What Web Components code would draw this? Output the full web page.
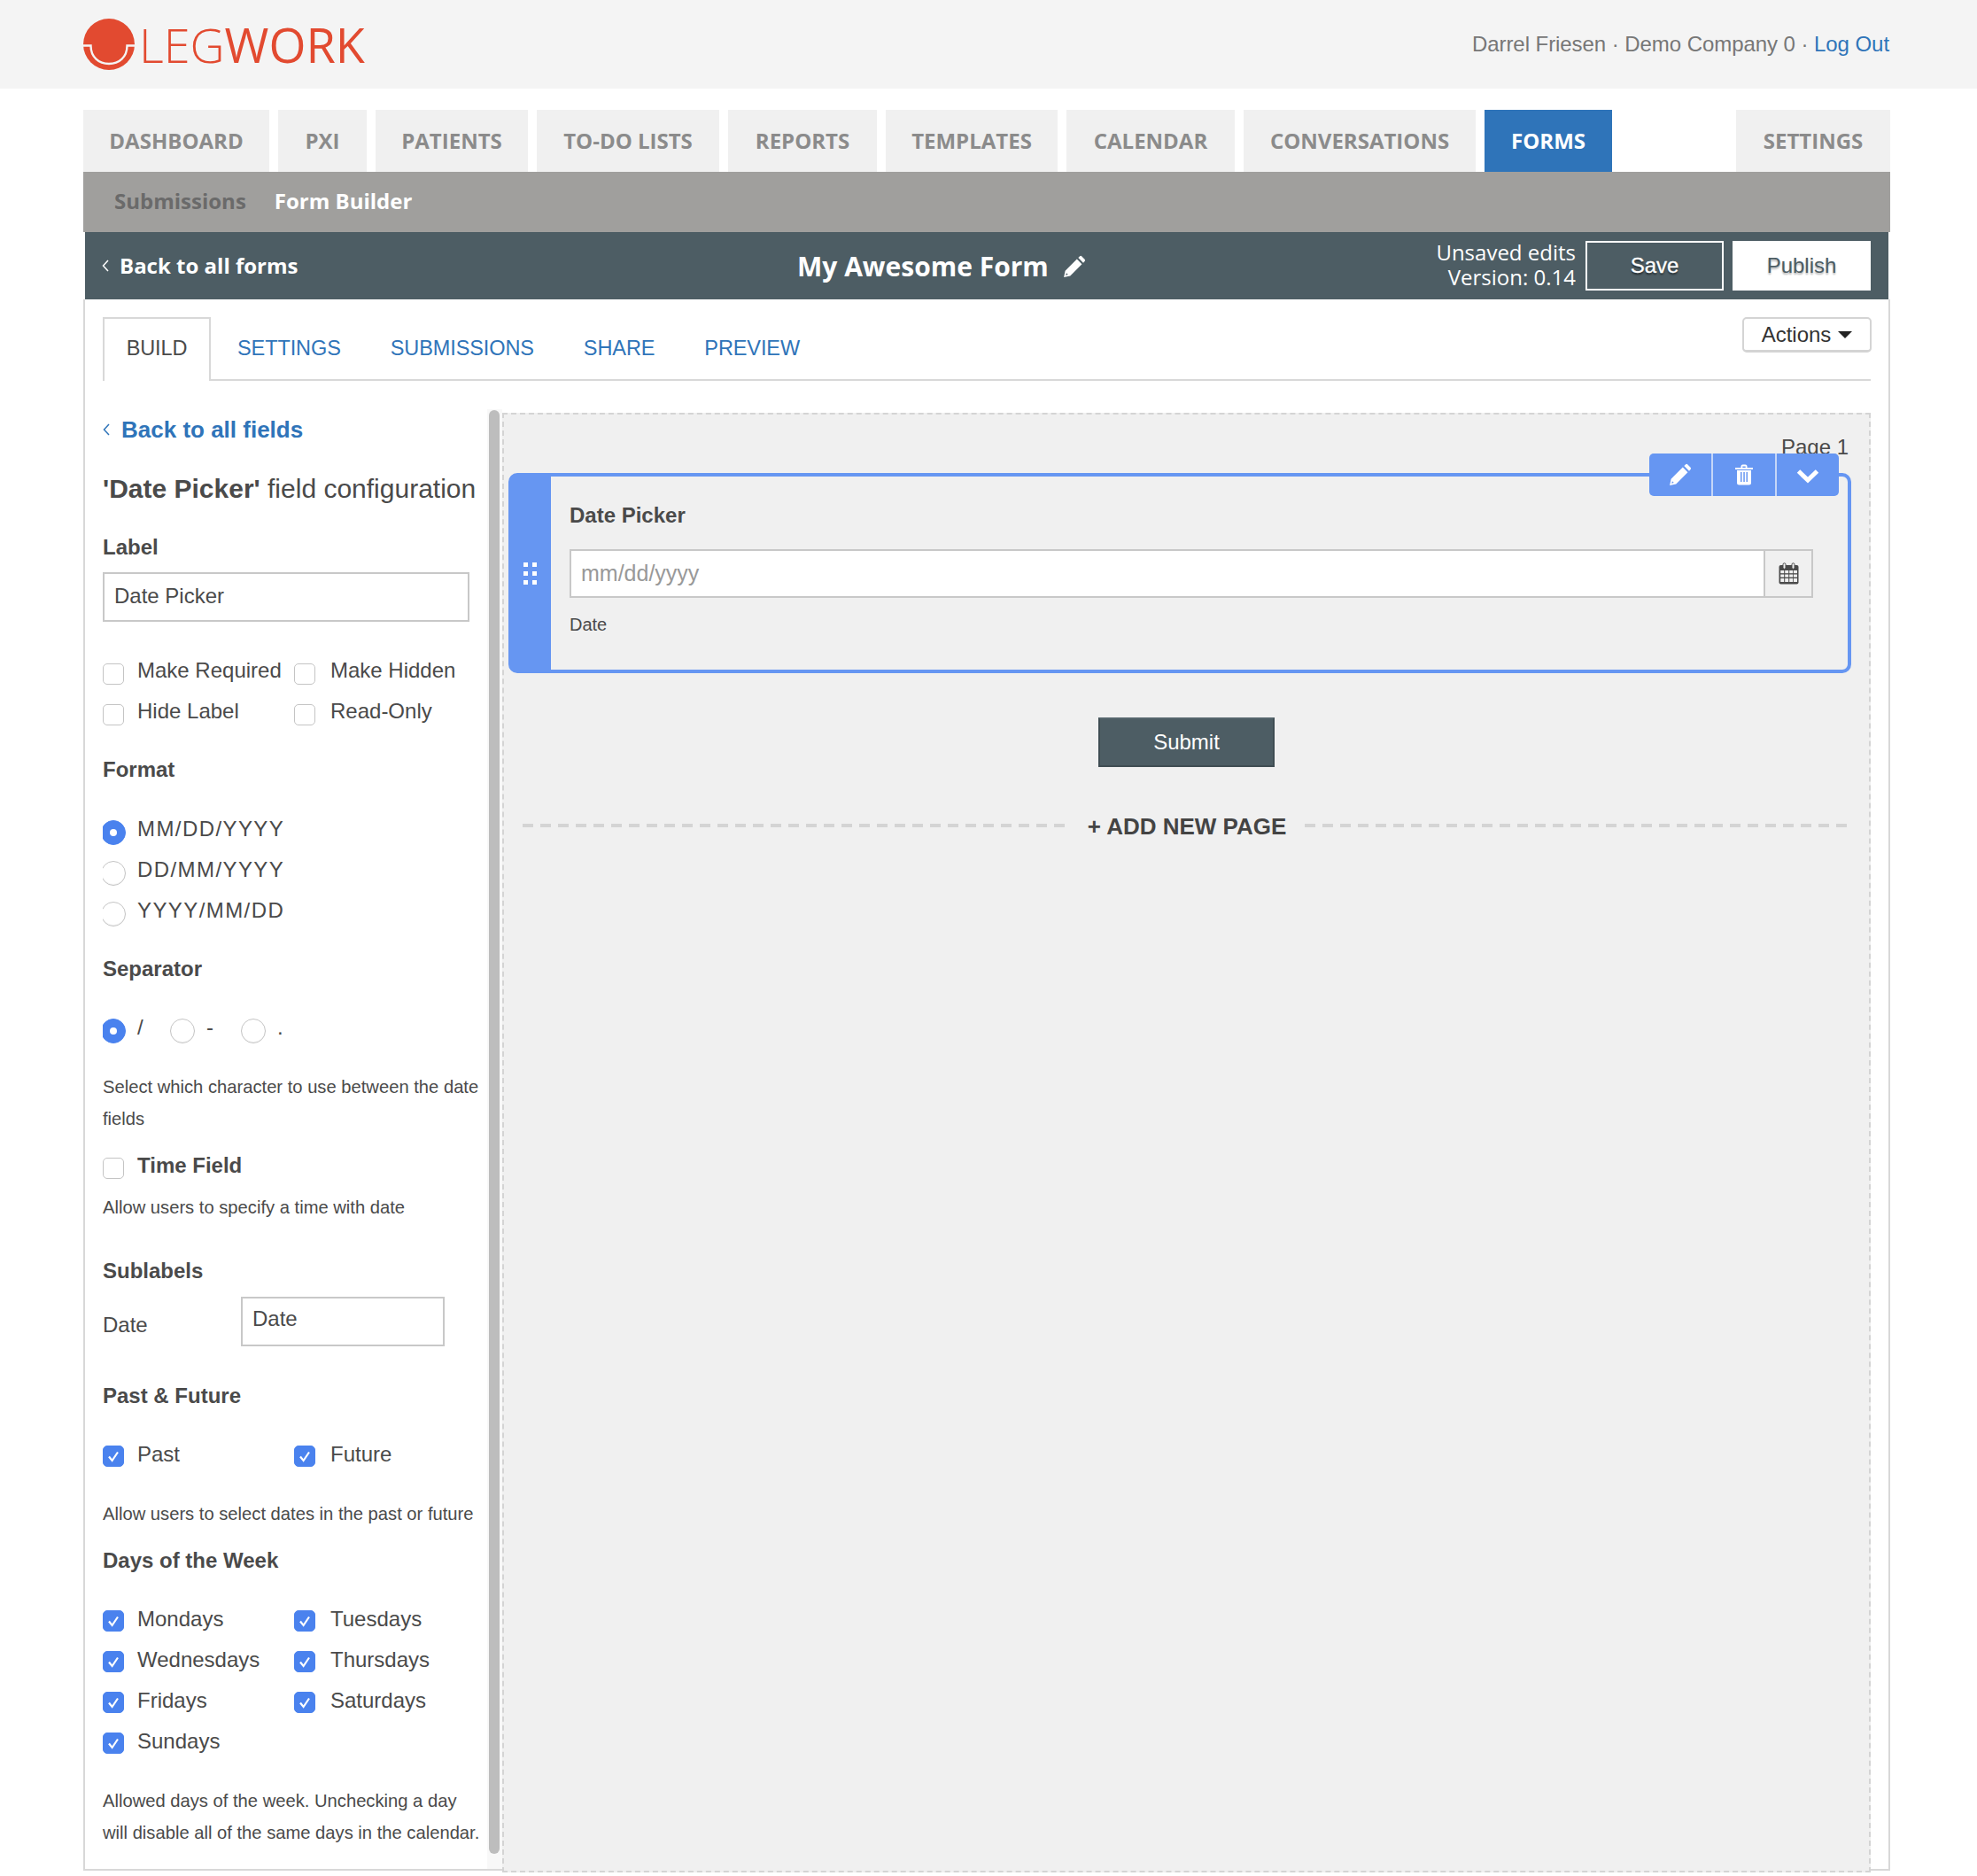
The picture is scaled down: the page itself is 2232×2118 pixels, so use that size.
<!DOCTYPE html>
<html lang="en">
<head>
<meta charset="utf-8">
<title>Legwork Form Builder</title>
<style>
  html, body { margin: 0; background: #fff; }
  body { font-family: "Liberation Sans", Arial, sans-serif; color: #4a4a4a; }
  app-shell { width: 2232px; height: 2118px; }
</style>
</head>
<body>
<app-shell>
  <app-header slot="header"></app-header>
  <main-nav slot="nav">
    <nav-tab style="width:210px">DASHBOARD</nav-tab>
    <nav-tab style="width:100px">PXI</nav-tab>
    <nav-tab style="width:172px">PATIENTS</nav-tab>
    <nav-tab style="width:206px">TO-DO LISTS</nav-tab>
    <nav-tab style="width:168px">REPORTS</nav-tab>
    <nav-tab style="width:194px">TEMPLATES</nav-tab>
    <nav-tab style="width:190px">CALENDAR</nav-tab>
    <nav-tab style="width:262px">CONVERSATIONS</nav-tab>
    <nav-tab style="width:144px" active>FORMS</nav-tab>
    <nav-tab style="width:174px" push>SETTINGS</nav-tab>
  </main-nav>
  <sub-nav slot="nav"></sub-nav>
  <form-bar slot="nav"></form-bar>
  <build-tabs slot="body"></build-tabs>
  <div slot="body" style="display:flex;height:1648px;margin-top:32px">
    <config-sidebar></config-sidebar>
    <form-canvas></form-canvas>
  </div>
</app-shell>

<script>
  // Icons used in more than one element
  const PENCIL = `<svg viewBox="0 0 24 24" fill="currentColor"><path d="M1 23l1.400-6.600L14.600 4.200l5.200 5.200L7.600 21.600zM3 21l2.400-.6-1.800-1.800z" fill-rule="evenodd"/><path d="M16 2.800l1.500-1.500a1.600 1.600 0 0 1 2.200 0l3 3a1.600 1.600 0 0 1 0 2.200l-1.500 1.500z"/></svg>`;
  const CHECK = `<svg viewBox="0 0 24 24" fill="none" stroke="#fff" stroke-width="2.200"><path d="M7 12.500l3.600 4.500L17 7.500"/></svg>`;

  class Base extends HTMLElement {
    constructor() {
      super();
      this.shadow = this.attachShadow({ mode: "open" });
      this.shadow.innerHTML = `<style>${this.css()}</style>${this.html()}`;
    }
    css() { return ":host{display:block}"; }
    html() { return "<slot></slot>"; }
  }

  class AppShell extends Base {
    css() {
      return `
        :host { display: block; }
        .wrap { width: 2040px; margin-left: 94px; margin-top: 24px; }
        .body { display: flow-root; border: solid #d8d8d8; border-width: 0 2px 2px 2px; width: 2036px; height: 1772px; box-sizing: content-box; }
      `;
    }
    html() {
      return `<slot name="header"></slot>
        <div class="wrap"><slot name="nav"></slot><div class="body"><slot name="body"></slot></div></div>`;
    }
  }

  class AppHeader extends Base {
    css() {
      return `
        :host { display: flex; height: 100px; background: #f4f4f4; align-items: center; justify-content: space-between; padding: 0 99px 0 94px; font-size: 24px; letter-spacing: -0.06px; color: #777; }
        .logo { display: flex; align-items: center; gap: 5px; color: #e24a30; }
        svg { width: 58px; height: 58px; display: block; }
        .word { font-family: "Open Sans", sans-serif; font-size: 54px; line-height: 58px; letter-spacing: 0; font-weight: 300; }
        .word b { font-weight: 500; }
        a { color: #2f74b9; text-decoration: none; }
      `;
    }
    html() {
      return `
        <div class="logo">
          <svg viewBox="0 0 58 58"><circle cx="29" cy="29" r="29" fill="#e24a30"/><path d="M0 30.500h8.500c0 13 9 20.500 20.500 20.500s20.500-7.500 20.500-20.500H58" fill="none" stroke="#f4f4f4" stroke-width="2.400"/></svg>
          <div class="word">LEG<b>WORK</b></div>
        </div>
        <div>Darrel Friesen · Demo Company 0 · <a>Log Out</a></div>`;
    }
  }

  class MainNav extends Base {
    css() { return `:host { display: flex; gap: 10px; height: 70px; }`; }
  }

  class NavTab extends Base {
    css() {
      return `
        :host { display: block; text-align: center; background: #f0f0f0; color: #8b8b8b; font: 700 24px/70px "Open Sans", sans-serif; }
        :host([active]) { background: #2f74b9; color: #fff; }
        :host([push]) { margin-left: auto; }
      `;
    }
  }

  class SubNav extends Base {
    css() {
      return `
        :host { display: flex; height: 68px; background: #a09f9d; padding-left: 35px; gap: 32px; font: 700 24px/66px "Open Sans", sans-serif; color: #6a6a6a; }
        .on { color: #fff; }
      `;
    }
    html() { return `<div>Submissions</div><div class="on">Form Builder</div>`; }
  }

  class FormBar extends Base {
    css() {
      return `
        :host { display: flex; align-items: center; height: 76px; margin-left: 2px; width: 2036px; background: #4d5d64; color: #fff; }
        .back { display: flex; align-items: center; font: 700 24px/1 "Open Sans", sans-serif; margin-left: 19px; gap: 12px; flex: 0 0 auto; width: 240px; }
        .back svg { width: 8px; height: 14px; }
        .title { display: flex; align-items: center; gap: 16px; font: 700 30px/1 "Open Sans", sans-serif; margin-left: 545px; padding-top: 2px; }
        .title svg { width: 26px; height: 26px; }
        .right { display: flex; align-items: center; margin-left: auto; margin-right: 20px; gap: 10px; }
        .state { text-align: right; font: 400 24px/28px "Open Sans", sans-serif; margin-right: 1px; margin-top: -2px; }
        .btn { box-sizing: border-box; width: 156px; height: 56px; font: 24px/52px "Liberation Sans", Arial, sans-serif; text-align: center; border: 2px solid #fff; }
        .save { text-shadow: 0 2px 2px rgba(0,0,0,.55); font-weight: 400; -webkit-text-stroke: 0.3px #fff; }
        .publish { background: #fff; color: #4d5d64; text-shadow: 0 2px 2px rgba(0,0,0,.3); }
      `;
    }
    html() {
      return `
        <div class="back"><svg viewBox="0 0 8 14" fill="none" stroke="#fff" stroke-width="1.500"><path d="M7 1L1.500 7 7 13"/></svg><span>Back to all forms</span></div>
        <div class="title"><span>My Awesome Form</span>${PENCIL}</div>
        <div class="right">
          <div class="state">Unsaved edits<br>Version: 0.14</div>
          <div class="btn save">Save</div>
          <div class="btn publish">Publish</div>
        </div>`;
    }
  }

  class BuildTabs extends Base {
    css() {
      return `
        :host { display: flex; margin: 20px 20px 0 20px; height: 72px; box-sizing: border-box; border-bottom: 2px solid #d8d8d8; font-size: 23.500px; letter-spacing: -0.1px; color: #2f74b9; }
        .t { line-height: 70px; padding: 0 28px; }
        .on { box-sizing: border-box; height: 72px; width: 122px; padding: 0; text-align: center; color: #4a4a4a; background: #fff; border: solid #d8d8d8; border-width: 2px 2px 0 2px; line-height: 66px; margin-right: 2px; }
        .actions { margin-left: auto; margin-right: -1px; box-sizing: border-box; width: 146px; height: 40px; border: 2px solid #d4d4d4; border-bottom-width: 3px; border-radius: 5px; color: #333; font-size: 24px; letter-spacing: 0; line-height: 34px; display: flex; align-items: center; justify-content: center; gap: 8px; background: #fff; }
        .caret { width: 0; height: 0; border: 8px solid transparent; border-top: 8px solid #222; border-bottom: 0; }
      `;
    }
    html() {
      return `
        <div class="t on">BUILD</div>
        <div class="t">SETTINGS</div>
        <div class="t">SUBMISSIONS</div>
        <div class="t">SHARE</div>
        <div class="t">PREVIEW</div>
        <div class="actions"><span>Actions</span><span class="caret"></span></div>`;
    }
  }

  class XCheck extends Base {
    css() {
      return `
        :host { display: flex; gap: var(--box-gap, 15px); height: 34px; line-height: 34px; font-size: 24px; color: #4a4a4a; }
        .box { box-sizing: border-box; flex: 0 0 24px; height: 24px; margin-top: var(--box-top, 7px); border: 1.500px solid #c4c4c4; border-radius: 5px; background: #fff; }
        .box svg { display: none; }
        :host([checked]) .box { background: #4a82ee; border-color: #4a82ee; }
        :host([checked]) .box svg { display: block; width: 24px; height: 24px; margin: -1.500px; }
        :host([bold]) { font-weight: 700; }
      `;
    }
    html() { return `<div class="box">${CHECK}</div><div><slot></slot></div>`; }
  }

  class XRadio extends Base {
    css() {
      return `
        :host { display: flex; gap: 13px; height: 34px; line-height: 34px; font-size: 24px; color: #4a4a4a; }
        :host([wide]) { letter-spacing: 1.420px; }
        .clip { flex: 0 0 28px; height: 28px; margin-top: 7px; overflow: hidden; }
        :host([clip]) .clip { flex-basis: 26px; }
        :host([clip]) .dot { margin-left: -2px; }
        .dot { box-sizing: border-box; width: 28px; height: 28px; border-radius: 50%; background: #fff; border: 1.500px solid #c4c4c4; box-shadow: inset 0 -1px 1px rgba(0,0,0,.06); display: flex; align-items: center; justify-content: center; }
        :host([checked]) .dot { background: #4a82ee; border-color: #4a82ee; box-shadow: none; }
        :host([checked]) .dot::after { content: ""; width: 8px; height: 8px; border-radius: 50%; background: #fff; }
      `;
    }
    html() { return `<div class="clip"><div class="dot"></div></div><div><slot></slot></div>`; }
  }

  class ConfigSidebar extends Base {
    css() {
      return `
        :host { display: flex; flex: 0 0 471px; height: 1648px; font-size: 24px; color: #4a4a4a; }
        .panel { flex: 0 0 434px; padding: 8px 0 0 20px; overflow: hidden; }
        .track { flex: 0 0 17px; background: #f8f8f8; padding: 1px 3px 0 2px; box-sizing: border-box; height: 1648px; }
        .thumb { height: 1630px; background: #bdbdbd; border-radius: 6px; }
        .back { display: flex; align-items: center; gap: 13px; color: #2f74b9; font: 700 26px/30px "Liberation Sans", Arial, sans-serif; }
        .back svg { width: 8px; height: 14px; }
        .title { font-size: 30px; line-height: 36px; margin-top: 34px; white-space: nowrap; }
        .h { font-weight: 700; line-height: 30px; }
        .input { box-sizing: border-box; border: 2px solid #c8c8c8; height: 56px; background: #fff; line-height: 50px; padding-left: 11px; }
        .cols { display: grid; grid-template-columns: 216px 1fr; row-gap: 12px; }
        .cols x-check:nth-child(even) { --box-gap: 17px; }
        .stack { display: flex; flex-direction: column; gap: 12px; }
        .help { font-size: 20.200px; line-height: 36px; }
        .sep { display: flex; }
        .sep x-radio:nth-child(1) { width: 76px; }
        .sep x-radio:nth-child(2) { width: 80px; }
      `;
    }
    html() {
      return `
        <div class="panel">
          <div class="back"><svg viewBox="0 0 8 14" fill="none" stroke="#2f74b9" stroke-width="1.500"><path d="M7 1L1.500 7 7 13"/></svg><span>Back to all fields</span></div>
          <div class="title"><b>'Date Picker'</b> field configuration</div>
          <div class="h" style="margin-top:33px">Label</div>
          <div class="input" style="margin-top:13px;width:414px">Date Picker</div>
          <div class="cols" style="margin-top:38px;--box-top:9px">
            <x-check>Make Required</x-check><x-check>Make Hidden</x-check>
            <x-check>Hide Label</x-check><x-check>Read-Only</x-check>
          </div>
          <div class="h" style="margin-top:34px">Format</div>
          <div class="stack" style="margin-top:35px">
            <x-radio clip wide checked>MM/DD/YYYY</x-radio>
            <x-radio clip wide>DD/MM/YYYY</x-radio>
            <x-radio clip wide>YYYY/MM/DD</x-radio>
          </div>
          <div class="h" style="margin-top:34px">Separator</div>
          <div class="sep" style="margin-top:34px">
            <x-radio clip checked>/</x-radio><x-radio>-</x-radio><x-radio>.</x-radio>
          </div>
          <div class="help" style="margin-top:32px">Select which character to use between the date fields</div>
          <x-check bold style="margin-top:18px;--box-top:8px">Time Field</x-check>
          <div class="help" style="margin-top:12px">Allow users to specify a time with date</div>
          <div class="h" style="margin-top:39px">Sublabels</div>
          <div style="display:flex;margin-top:14px">
            <div style="width:156px;line-height:34px;margin-top:15px">Date</div>
            <div class="input" style="width:230px;line-height:46px">Date</div>
          </div>
          <div class="h" style="margin-top:41px">Past &amp; Future</div>
          <div class="cols" style="margin-top:34px"><x-check checked>Past</x-check><x-check checked>Future</x-check></div>
          <div class="help" style="margin-top:32px">Allow users to select dates in the past or future</div>
          <div class="h" style="margin-top:20px">Days of the Week</div>
          <div class="cols" style="margin-top:34px">
            <x-check checked>Mondays</x-check><x-check checked>Tuesdays</x-check>
            <x-check checked>Wednesdays</x-check><x-check checked>Thursdays</x-check>
            <x-check checked>Fridays</x-check><x-check checked>Saturdays</x-check>
            <x-check checked>Sundays</x-check>
          </div>
          <div class="help" style="margin-top:32px;white-space:nowrap">Allowed days of the week. Unchecking a day<br>will disable all of the same days in the calendar.</div>
        </div>
        <div class="track"><div class="thumb"></div></div>`;
    }
  }

  class DateField extends Base {
    css() {
      return `
        :host { display: flex; position: relative; box-sizing: border-box; height: 226px; border: 4px solid #6696f2; border-radius: 10px; }
        .grip { flex: 0 0 40px; padding-right: 4px; background: #6696f2; display: grid; grid-template-columns: 5px 5px; grid-auto-rows: 5px; gap: 5px; align-content: center; justify-content: center; }
        .grip i { background: #fff; }
        .main { flex: 1; padding: 0 0 0 21px; }
        .lab { font-weight: 700; line-height: 30px; margin-top: 29px; }
        .group { display: flex; height: 55px; width: 1404px; margin-top: 23px; box-sizing: border-box; border: 2px solid #c8c8c8; background: #fff; }
        .ph { flex: 1; color: #999; font-size: 25px; line-height: 50px; padding-left: 11px; }
        .addon { flex: 0 0 54px; background: #f0f0f0; border-left: 2px solid #c8c8c8; box-sizing: border-box; display: flex; align-items: center; justify-content: center; }
        .addon svg { width: 23px; height: 25px; }
        .sub { font-size: 20px; line-height: 30px; margin-top: 15px; }
        .tools { position: absolute; top: -26px; right: 10px; width: 214px; height: 48px; display: flex; background: #6696f2; border-radius: 5px; color: #fff; }
        .tools div { flex: 1; display: flex; align-items: center; justify-content: center; border-left: 2px solid #c5d6f8; }
        .tools div:first-child { border-left: 0; }
        .tools svg { width: 26px; height: 26px; }
      `;
    }
    html() {
      return `
        <div class="grip"><i></i><i></i><i></i><i></i><i></i><i></i></div>
        <div class="main">
          <div class="lab">Date Picker</div>
          <div class="group">
            <div class="ph">mm/dd/yyyy</div>
            <div class="addon">
              <svg viewBox="0 0 23 25"><rect x="0.500" y="3" width="22" height="21.500" rx="2" fill="#4a4a4a"/><g fill="#f0f0f0"><rect x="2.200" y="9" width="4" height="3.200"/><rect x="7.200" y="9" width="4" height="3.200"/><rect x="12.200" y="9" width="4" height="3.200"/><rect x="17" y="9" width="4" height="3.200"/><rect x="2.200" y="13.500" width="4" height="3.200"/><rect x="7.200" y="13.500" width="4" height="3.200"/><rect x="12.200" y="13.500" width="4" height="3.200"/><rect x="17" y="13.500" width="4" height="3.200"/><rect x="2.200" y="18" width="4" height="4"/><rect x="7.200" y="18" width="4" height="4"/><rect x="12.200" y="18" width="4" height="4"/><rect x="17" y="18" width="4" height="4"/></g><rect x="5" y="0.800" width="3" height="6.500" rx="1.500" fill="#f0f0f0" stroke="#4a4a4a"/><rect x="15" y="0.800" width="3" height="6.500" rx="1.500" fill="#f0f0f0" stroke="#4a4a4a"/></svg>
            </div>
          </div>
          <div class="sub">Date</div>
        </div>
        <div class="tools">
          <div>${PENCIL}</div>
          <div><svg viewBox="0 0 26 26" fill="#fff"><path d="M3 5h20v2H3zM9.500 5.500V3.500a2 2 0 0 1 2-2h3a2 2 0 0 1 2 2v2h-1.800v-2h-3.400v2z"/><path d="M5 8h16v14a2.500 2.500 0 0 1-2.500 2.500h-11A2.500 2.500 0 0 1 5 22z"/><path d="M9 10h1.500v11H9zM12.300 10h1.500v11h-1.500zM15.500 10H17v11h-1.500z" fill="#6696f2"/></svg></div>
          <div><svg viewBox="0 0 26 26" fill="none" stroke="#fff" stroke-width="5"><path d="M2.500 9L13 19 23.500 9"/></svg></div>
        </div>`;
    }
  }

  class FormCanvas extends Base {
    css() {
      return `
        :host { display: block; box-sizing: border-box; flex: 0 0 1545px; height: 1648px; margin-top: 4px; background: #f0f0f0; border: 2px dashed #d4d4d4; padding: 0 20px 0 5px; font-size: 24px; color: #4a4a4a; }
        .page { text-align: right; line-height: 30px; margin: 22px 3px 0 0; height: 44px; }
        date-field { width: 1516px; }
        .submit { display: block; box-sizing: border-box; width: 199px; height: 56px; margin: 50px 0 0 666px; background: #4d5d64; border: 2px solid #3f4d53; border-top-color: #56666d; color: #fff; text-align: center; line-height: 52px; }
        .more { display: flex; align-items: center; margin: 50px 0 0 16px; width: 1500px; height: 32px; }
        .line { flex: 1; height: 4px; background: repeating-linear-gradient(90deg, #d4d4d4 0 12px, transparent 12px 20px); }
        .txt { font-size: 26px; font-weight: 700; padding: 2px 21px 0 21px; color: #444; white-space: nowrap; }
      `;
    }
    html() {
      return `
        <div class="page">Page 1</div>
        <date-field></date-field>
        <div class="submit">Submit</div>
        <div class="more"><div class="line"></div><div class="txt">+ ADD NEW PAGE</div><div class="line"></div></div>`;
    }
  }

  // children first so upgrades happen in document order
  customElements.define("x-check", XCheck);
  customElements.define("x-radio", XRadio);
  customElements.define("date-field", DateField);
  customElements.define("nav-tab", NavTab);
  customElements.define("main-nav", MainNav);
  customElements.define("sub-nav", SubNav);
  customElements.define("form-bar", FormBar);
  customElements.define("build-tabs", BuildTabs);
  customElements.define("config-sidebar", ConfigSidebar);
  customElements.define("form-canvas", FormCanvas);
  customElements.define("app-header", AppHeader);
  customElements.define("app-shell", AppShell);
</script>
</body>
</html>
